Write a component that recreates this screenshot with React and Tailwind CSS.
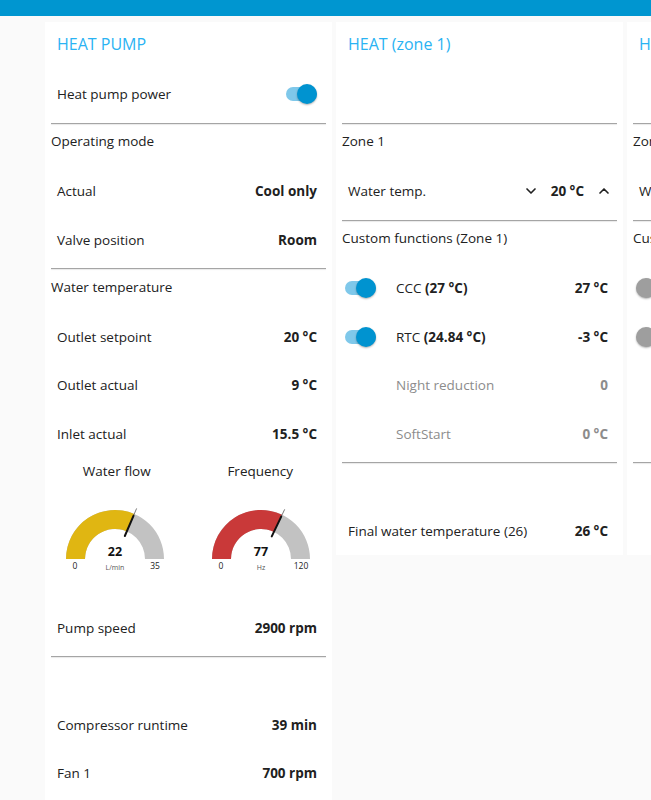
import React from 'react';
import { ChevronDown, ChevronUp } from 'lucide-react';

const font = { fontFamily: '"Open Sans", "Noto Sans", sans-serif' };

function Toggle({ on = true }) {
  return (
    <div className="relative w-[31px] h-5 flex items-center shrink-0">
      <div className={`h-3.5 w-full rounded-full ${on ? 'bg-[#7fc8ea]' : 'bg-[#ececec]'}`}></div>
      <div
        className={`absolute top-0 size-5 rounded-full shadow-[0_1px_2px_rgba(0,0,0,0.3)] ${on ? 'right-0 bg-[#0093d0]' : 'left-0 bg-[#9e9e9e]'}`}
      ></div>
    </div>
  );
}

function Divider() {
  return <div className="mx-1.5 mt-1 h-px bg-[#a5a5a5] shadow-[0_1px_1px_rgba(0,0,0,0.1)]"></div>;
}

function SectionHeader({ children }) {
  return <div className="h-[35.5px] flex items-center px-1.5 text-[13.5px] text-[#212121] mb-2">{children}</div>;
}

function Row({ label, value, right }) {
  return (
    <div className="h-[48.5px] flex items-center justify-between pl-3 pr-[15px] text-[13.5px] text-[#212121]">
      <span>{label}</span>
      {right ? right : <span className="font-bold">{value}</span>}
    </div>
  );
}

function FuncRow({ toggle, label, bold, value, muted }) {
  return (
    <div className="h-[48.5px] flex items-center pl-[9px] pr-[15px] text-[13.5px]">
      {toggle ? <Toggle on={toggle === 'on'} /> : <div className="w-[31px] shrink-0"></div>}
      <span className={`ml-[20px] flex-1 ${muted ? 'text-[#8c8c8c]' : 'text-[#212121]'}`}>
        {label}
        {bold && <span className="font-bold"> {bold}</span>}
      </span>
      <span className={`font-bold ${muted ? 'text-[#8c8c8c]' : 'text-[#212121]'}`}>{value}</span>
    </div>
  );
}

function Gauge({ title, value, min, max, unit, color, shift }) {
  const cx = 60;
  const cy = 55;
  const R = 49;
  const r = 30;
  const f = (value - min) / (max - min);
  const t = Math.PI * (1 - f);
  const ox = cx + R * Math.cos(t);
  const oy = cy - R * Math.sin(t);
  const ix = cx + r * Math.cos(t);
  const iy = cy - r * Math.sin(t);
  const full = `M ${cx - R} ${cy} A ${R} ${R} 0 0 1 ${cx + R} ${cy} L ${cx + r} ${cy} A ${r} ${r} 0 0 0 ${cx - r} ${cy} Z`;
  const part = `M ${cx - R} ${cy} A ${R} ${R} 0 0 1 ${ox} ${oy} L ${ix} ${iy} A ${r} ${r} 0 0 0 ${cx - r} ${cy} Z`;
  const p = (rad) => [cx + rad * Math.cos(t), cy - rad * Math.sin(t)];
  const [n1x, n1y] = p(25);
  const [n2x, n2y] = p(47);
  const [n3x, n3y] = p(55);
  return (
    <div className="flex flex-col items-center pt-[3px]">
      <div className="leading-5 text-[13.5px] text-[#212121]">{title}</div>
      <svg width="120" height="75" viewBox="0 0 120 75" className={`mt-[23px] ${shift}`}>
        <path d={full} fill="#c2c2c2" />
        <path d={part} fill={color} />
        <line x1={n2x} y1={n2y} x2={n3x} y2={n3y} stroke="#555" strokeWidth="0.8" />
        <line x1={n1x} y1={n1y} x2={n2x} y2={n2y} stroke="#111" strokeWidth="2" strokeLinecap="round" />
        <text x={cx} y={cy - 3} textAnchor="middle" fontSize="12.5" fontWeight="700" fill="#111" style={font}>{value}</text>
        <text x={cx} y={cy + 11} textAnchor="middle" fontSize="7" fill="#555" style={font}>{unit}</text>
        <text x={cx - 40} y={cy + 10} textAnchor="middle" fontSize="8.5" fill="#222" style={font}>{min}</text>
        <text x={cx + 40} y={cy + 10} textAnchor="middle" fontSize="8.5" fill="#222" style={font}>{max}</text>
      </svg>
    </div>
  );
}

function CardTitle({ children }) {
  return <div className="h-11 flex items-center px-3 text-[16px] font-medium text-[#2ab3f3]">{children}</div>;
}

export default function App() {
  return (
    <div className="min-h-screen w-[651px] overflow-hidden bg-[#fafafa]" style={font}>
      <div className="h-4 bg-[#0096d0]"></div>
      <div className="flex gap-1 pl-[45px] pt-1.5 items-start">
        <div className="w-[287px] shrink-0 bg-white">
          <CardTitle>HEAT PUMP</CardTitle>
          <div className="mt-1">
            <Row label="Heat pump power" right={<Toggle on />} />
          </div>
          <Divider />
          <SectionHeader>Operating mode</SectionHeader>
          <Row label="Actual" value="Cool only" />
          <Row label="Valve position" value="Room" />
          <Divider />
          <SectionHeader>Water temperature</SectionHeader>
          <Row label="Outlet setpoint" value="20 °C" />
          <Row label="Outlet actual" value="9 °C" />
          <Row label="Inlet actual" value="15.5 °C" />
          <div className="h-[145.5px] grid grid-cols-2">
            <Gauge title="Water flow" value={22} min={0} max={35} unit="L/min" color="#e0b612" shift="-ml-1" />
            <Gauge title="Frequency" value={77} min={0} max={120} unit="Hz" color="#c93939" shift="ml-[2px]" />
          </div>
          <Row label="Pump speed" value="2900 rpm" />
          <Divider />
          <SectionHeader></SectionHeader>
          <Row label="Compressor runtime" value="39 min" />
          <Row label="Fan 1" value="700 rpm" />
          <div className="h-6"></div>
        </div>

        <div className="w-[287px] shrink-0 bg-white">
          <CardTitle>HEAT (zone 1)</CardTitle>
          <div className="mt-1 h-[48.5px]"></div>
          <Divider />
          <SectionHeader>Zone 1</SectionHeader>
          <Row
            label="Water temp."
            right={
              <div className="flex items-center text-[#212121]">
                <ChevronDown size={16} strokeWidth={2.5} />
                <span className="font-bold ml-3 mr-3">20 °C</span>
                <ChevronUp size={16} strokeWidth={2.5} className="-mr-1" />
              </div>
            }
          />
          <Divider />
          <SectionHeader>Custom functions (Zone 1)</SectionHeader>
          <FuncRow toggle="on" label="CCC" bold="(27 °C)" value="27 °C" />
          <FuncRow toggle="on" label="RTC" bold="(24.84 °C)" value="-3 °C" />
          <FuncRow muted label="Night reduction" value="0" />
          <FuncRow muted label="SoftStart" value="0 °C" />
          <Divider />
          <SectionHeader></SectionHeader>
          <Row label="Final water temperature (26)" value="26 °C" />
        </div>

        <div className="w-[287px] shrink-0 bg-white">
          <CardTitle>HEAT (zone 2)</CardTitle>
          <div className="mt-1 h-[48.5px]"></div>
          <Divider />
          <SectionHeader>Zone 2</SectionHeader>
          <Row
            label="Water temp."
            right={
              <div className="flex items-center text-[#212121]">
                <ChevronDown size={16} strokeWidth={2.5} />
                <span className="font-bold ml-3 mr-3">20 °C</span>
                <ChevronUp size={16} strokeWidth={2.5} className="-mr-1" />
              </div>
            }
          />
          <Divider />
          <SectionHeader>Custom functions (Zone 2)</SectionHeader>
          <FuncRow toggle="off" label="CCC" value="" />
          <FuncRow toggle="off" label="RTC" value="" />
          <div className="h-[97px]"></div>
          <Divider />
          <SectionHeader></SectionHeader>
          <div className="h-[48.5px]"></div>
        </div>
      </div>
    </div>
  );
}
